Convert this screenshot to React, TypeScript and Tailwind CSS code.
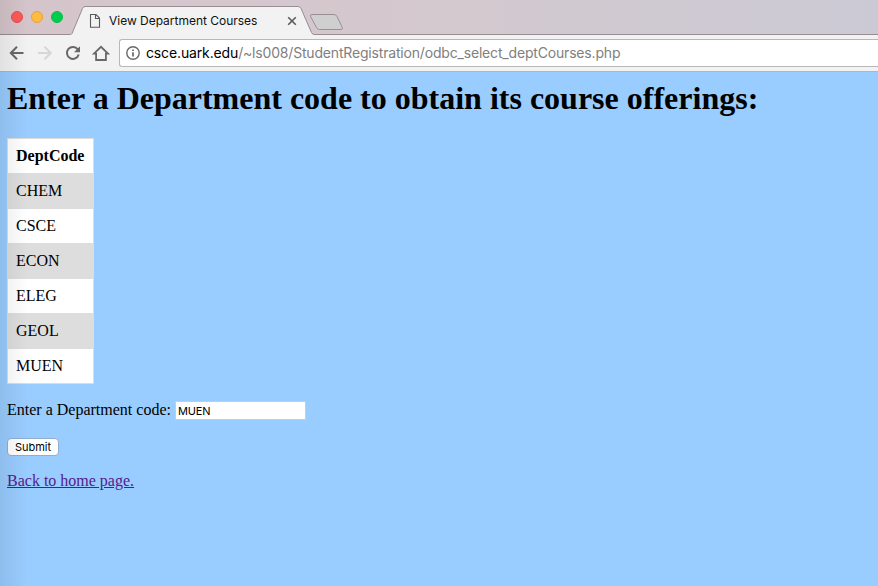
const departments = ["CHEM", "CSCE", "ECON", "ELEG", "GEOL", "MUEN"];

function TabStrip() {
  return (
    <div className="relative flex h-[35px] items-start bg-linear-to-r from-[#d5c5ca] via-[#d4c9cf] to-[#cbcad4]">
      <svg className="absolute inset-0" width="878" height="35" fill="none">
        <path d="M0 34.5H70.5Q71.5 34.5 72 33.5L82.5 8.5Q83.5 6.5 85 6.5H298Q300 6.5 301 8.5L311.5 32.5Q312.5 34.5 314 34.5H878V35H0Z" fill="#f2f2f2" />
        <path d="M0 34.5H70.5Q71.5 34.5 72 33.5L82.5 8.5Q83.5 6.5 85 6.5H298Q300 6.5 301 8.5L311.5 32.5Q312.5 34.5 314 34.5H878" stroke="#968e93" />
        <path d="M312 14.5H334Q336 14.5 337 16.5L342.3 27.5Q343 29.5 341 29.5H319.5Q317.5 29.5 316.5 27.5L310.6 16.5Q309.8 14.5 312 14.5Z" fill="#cfcfcf" stroke="#969094" />
      </svg>
      <div className="relative ml-[11px] mt-[11px] flex gap-2">
        <span className="size-3 rounded-full border border-[#e9494a] bg-[#fc5b57]" />
        <span className="size-3 rounded-full border border-[#e9a13b] bg-[#fdbb40]" />
        <span className="size-3 rounded-full border border-[#0abb48] bg-[#00cd4e]" />
      </div>
      <svg className="relative ml-[26px] mt-[13px]" width="12" height="15" fill="none" stroke="#5a5a5a">
        <path d="M1.5 1.5H7L10.5 5V14.3H1.5ZM6.5 1.5V5.5H10.5" strokeWidth="1.1" />
      </svg>
      <span className="relative ml-2 mt-[12px] w-[170px] whitespace-nowrap font-[Inter,sans-serif] text-[12px] leading-[17px] tracking-[-0.02px] text-[#111]">
        View Department Courses
      </span>
      <svg className="relative ml-[8px] mt-[16px]" width="10" height="10" stroke="#5a5a5a" strokeWidth="1.6">
        <path d="M1.2 1.2L8.8 8.8M8.8 1.2L1.2 8.8" />
      </svg>
    </div>
  );
}

function Toolbar() {
  return (
    <div className="flex h-[37px] items-start border-b border-[#b5b5b5] bg-[#f2f2f2]">
      <svg className="mt-[10px]" width="119" height="18" fill="none" stroke="#686868" strokeWidth="2">
        <path d="M23.5 8H11.5M17 1.8L10.8 8L17 14.2" />
        <path d="M38 8H50M44.5 1.8L50.7 8L44.5 14.2" stroke="#d6d6d6" />
        <path d="M77.8 4.4A6 6 0 1 0 78.7 9.5" />
        <path d="M80 1.2V7.2H74Z" fill="#686868" stroke="none" />
        <path d="M94 8.7H96.1V15H105.9V8.7H108L101 1.8Z" strokeWidth="1.8" />
      </svg>
      <div className="mt-[4px] flex h-7 flex-1 items-center rounded-l-[3px] border border-r-0 border-[#b7b7b7] bg-white">
        <svg className="ml-[6px]" width="14" height="14" fill="none" stroke="#686868">
          <circle cx="7" cy="7" r="6.2" strokeWidth="1.4" />
          <path d="M7 6.2V10.5M7 3.4V5" strokeWidth="1.7" />
        </svg>
        <span className="ml-[6px] whitespace-nowrap font-[Inter,sans-serif] text-[14px] leading-5 tracking-[-0.18px] text-[#808080]">
          <span className="tracking-[-0.14px] text-black">csce.uark.edu</span>/~ls008/StudentRegistration/odbc_select_deptCourses.php
        </span>
      </div>
    </div>
  );
}

export default function App() {
  return (
    <div className="relative flex h-[586px] w-[878px] flex-col overflow-hidden bg-[#99ccff]">
      <TabStrip />
      <Toolbar />
      <main className="flex flex-1 flex-col items-start pl-[7px] pt-[8px] font-['Liberation_Serif',serif] text-base text-black">
        <h1 className="whitespace-nowrap text-[32px] font-bold leading-[37px]">
          Enter a Department code to obtain its course offerings:
        </h1>
        <table className="mt-[21px] w-[87px] border-collapse border border-[#ddd] bg-white text-left leading-[18px]">
          <thead>
            <tr className="h-[35px]">
              <th className="border border-[#ddd] px-2 py-0 font-bold">DeptCode</th>
            </tr>
          </thead>
          <tbody>
            {departments.map((code) => (
              <tr key={code} className="h-[35px] odd:bg-[#ddd]">
                <td className="border border-[#ddd] px-2 py-0">{code}</td>
              </tr>
            ))}
          </tbody>
        </table>
        <form className="mt-[17px]" onSubmit={(event) => event.preventDefault()}>
          <label className="flex h-[19px] items-center whitespace-nowrap">
            <span className="h-[19px] leading-[17px]">Enter a Department code:</span>
            <input
              className="ml-[4px] h-[19px] w-[131px] border border-[#ccc] bg-white px-[2px] font-[Inter,sans-serif] text-[11px] tracking-[-0.1px] outline-none"
              defaultValue="MUEN"
            />
          </label>
          <button className="mt-[18px] block h-[18px] w-[52px] rounded-[4px] border border-[#8faed0] bg-white font-[Inter,sans-serif] text-[11px] leading-[15px]">
            Submit
          </button>
        </form>
        <a href="#" className="mt-[16px] leading-[18px] text-[#551a8b] underline">
          Back to home page.
        </a>
      </main>
      <div className="pointer-events-none absolute inset-y-0 left-0 w-[28px] bg-linear-to-r from-black/7 to-transparent" />
    </div>
  );
}
